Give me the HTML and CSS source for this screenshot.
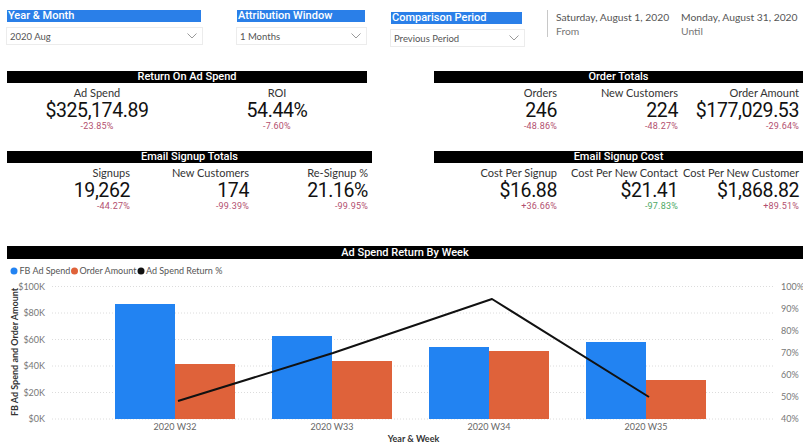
FILE: index.html
```html
<!DOCTYPE html>
<html lang="en">
<head>
    <meta charset="UTF-8">
    <title>Ad Spend Report</title>
    <link rel="stylesheet" href="styles.css">
</head>
<body>
    <div class="report">
        <!-- Filters -->
        <div class="filters">
            <div class="slicer slicer-month">
                <div class="slicer-head">Year &amp; Month</div>
                <div class="slicer-box">
                    <span>2020 Aug</span>
                    <svg class="chev" width="10" height="6" viewBox="0 0 10 6"><polyline points="0.5,0.5 5,5 9.5,0.5"/></svg>
                </div>
            </div>
            <div class="slicer slicer-window">
                <div class="slicer-head">Attribution Window</div>
                <div class="slicer-box">
                    <span>1 Months</span>
                    <svg class="chev" width="10" height="6" viewBox="0 0 10 6"><polyline points="0.5,0.5 5,5 9.5,0.5"/></svg>
                </div>
            </div>
            <div class="slicer slicer-compare">
                <div class="slicer-head">Comparison Period</div>
                <div class="slicer-box">
                    <span>Previous Period</span>
                    <svg class="chev" width="10" height="6" viewBox="0 0 10 6"><polyline points="0.5,0.5 5,5 9.5,0.5"/></svg>
                </div>
            </div>
            <div class="dates">
                <div class="date-col date-from">
                    <div class="date">Saturday, August 1, 2020</div>
                    <div class="date-label">From</div>
                </div>
                <div class="date-col">
                    <div class="date">Monday, August 31, 2020</div>
                    <div class="date-label">Until</div>
                </div>
            </div>
        </div>

        <!-- KPI cards -->
        <div class="card-row row-top">
            <section class="card card-roas">
                <h2 class="card-title">Return On Ad Spend</h2>
                <div class="metrics centered">
                    <div class="metric">
                        <div class="label">Ad Spend</div>
                        <div class="value">$325,174.89</div>
                        <div class="delta down">-23.85%</div>
                    </div>
                    <div class="metric">
                        <div class="label">ROI</div>
                        <div class="value">54.44%</div>
                        <div class="delta down">-7.60%</div>
                    </div>
                </div>
            </section>
            <section class="card card-orders">
                <h2 class="card-title">Order Totals</h2>
                <div class="metrics">
                    <div class="metric">
                        <div class="label">Orders</div>
                        <div class="value">246</div>
                        <div class="delta down">-48.86%</div>
                    </div>
                    <div class="metric">
                        <div class="label">New Customers</div>
                        <div class="value">224</div>
                        <div class="delta down">-48.27%</div>
                    </div>
                    <div class="metric">
                        <div class="label">Order Amount</div>
                        <div class="value">$177,029.53</div>
                        <div class="delta down">-29.64%</div>
                    </div>
                </div>
            </section>
        </div>

        <div class="card-row row-bottom">
            <section class="card card-signups">
                <h2 class="card-title">Email Signup Totals</h2>
                <div class="metrics">
                    <div class="metric">
                        <div class="label">Signups</div>
                        <div class="value">19,262</div>
                        <div class="delta down">-44.27%</div>
                    </div>
                    <div class="metric">
                        <div class="label">New Customers</div>
                        <div class="value">174</div>
                        <div class="delta down">-99.39%</div>
                    </div>
                    <div class="metric">
                        <div class="label">Re-Signup %</div>
                        <div class="value">21.16%</div>
                        <div class="delta down">-99.95%</div>
                    </div>
                </div>
            </section>
            <section class="card card-cost">
                <h2 class="card-title">Email Signup Cost</h2>
                <div class="metrics">
                    <div class="metric">
                        <div class="label">Cost Per Signup</div>
                        <div class="value">$16.88</div>
                        <div class="delta down">+36.66%</div>
                    </div>
                    <div class="metric">
                        <div class="label">Cost Per New Contact</div>
                        <div class="value">$21.41</div>
                        <div class="delta up">-97.83%</div>
                    </div>
                    <div class="metric">
                        <div class="label">Cost Per New Customer</div>
                        <div class="value">$1,868.82</div>
                        <div class="delta down">+89.51%</div>
                    </div>
                </div>
            </section>
        </div>

        <!-- Weekly chart -->
        <section class="chart">
            <h2 class="card-title">Ad Spend Return By Week</h2>
            <svg class="plot" width="796" height="186" viewBox="7 258 796 186">
                <!-- legend -->
                <g class="legend">
                    <circle cx="14" cy="270" r="3.5" fill="#2283f2"/>
                    <text x="19.5" y="273">FB Ad Spend</text>
                    <circle cx="74.5" cy="270" r="3.5" fill="#df623a"/>
                    <text x="79.5" y="273">Order Amount</text>
                    <circle cx="141" cy="270" r="3.5" fill="#111"/>
                    <text x="146" y="273">Ad Spend Return %</text>
                </g>

                <!-- grid -->
                <g class="grid">
                    <line x1="52" x2="775" y1="285.5" y2="285.5"/>
                    <line x1="52" x2="775" y1="312" y2="312"/>
                    <line x1="52" x2="775" y1="338.5" y2="338.5"/>
                    <line x1="52" x2="775" y1="365" y2="365"/>
                    <line x1="52" x2="775" y1="391.5" y2="391.5"/>
                    <line x1="52" x2="775" y1="418" y2="418"/>
                </g>

                <!-- left axis -->
                <g class="axis axis-left">
                    <text x="45" y="288.5">$100K</text>
                    <text x="45" y="315">$80K</text>
                    <text x="45" y="341.5">$60K</text>
                    <text x="45" y="368">$40K</text>
                    <text x="45" y="394.5">$20K</text>
                    <text x="45" y="421">$0K</text>
                </g>

                <!-- right axis -->
                <g class="axis axis-right">
                    <text x="781" y="288.5">100%</text>
                    <text x="781" y="310.5">90%</text>
                    <text x="781" y="332.5">80%</text>
                    <text x="781" y="354.5">70%</text>
                    <text x="781" y="376.5">60%</text>
                    <text x="781" y="398.5">50%</text>
                    <text x="781" y="420.5">40%</text>
                </g>

                <!-- bars -->
                <g class="bars-spend">
                    <rect x="115" y="303" width="60" height="115"/>
                    <rect x="272" y="335" width="60" height="83"/>
                    <rect x="429" y="346" width="60" height="72"/>
                    <rect x="586" y="341" width="60" height="77"/>
                </g>
                <g class="bars-orders">
                    <rect x="175" y="363" width="60" height="55"/>
                    <rect x="332" y="360" width="60" height="58"/>
                    <rect x="489" y="350" width="60" height="68"/>
                    <rect x="646" y="379" width="60" height="39"/>
                </g>

                <!-- return line -->
                <polyline class="return-line" points="178,400 333,352 492,298 649,396"/>

                <!-- category axis -->
                <g class="axis axis-bottom">
                    <text x="175" y="428.5">2020 W32</text>
                    <text x="332" y="428.5">2020 W33</text>
                    <text x="489" y="428.5">2020 W34</text>
                    <text x="646" y="428.5">2020 W35</text>
                </g>
                <text class="axis-title" x="413.5" y="441">Year &amp; Week</text>
                <text class="axis-title" transform="translate(18 351) rotate(-90)">FB Ad Spend and Order Amount</text>
            </svg>
        </section>
    </div>
</body>
</html>
```

FILE: styles.css
```css
/* General */
body {
    margin: 0;
    background: #fff;
    font-family: 'Lato', sans-serif;
    color: #333;
}

.report {
    width: 810px;
    height: 444px;
    padding: 10px 7px 0;
    box-sizing: border-box;
    overflow: hidden;
}

/* Filters */
.filters {
    display: flex;
    align-items: flex-start;
    height: 61px;
}

.slicer-head {
    background-color: #2a7fe8;
    color: #fff;
    font-family: 'Roboto', sans-serif;
    font-weight: 500;
    font-size: 11px;
    line-height: 12px;
    height: 12px;
    padding-left: 1px;
    margin-left: 1px;
    margin-right: 2px;
}

.slicer-box {
    display: flex;
    align-items: center;
    justify-content: space-between;
    height: 18px;
    margin-top: 5px;
    padding: 0 5px 0 3px;
    border: 1px solid #ececec;
    box-sizing: border-box;
    font-size: 9.5px;
    color: #555;
}

.chev {
    fill: none;
    stroke: #9a9a9a;
    stroke-width: 1;
}

.slicer-month {
    width: 197px;
    margin-left: -1px;
}

.slicer-window {
    width: 131px;
    margin-left: 33px;
}

.slicer-compare {
    width: 135px;
    margin-left: 23px;
    margin-top: 2px;
}

.slicer-compare .slicer-head {
    margin-right: 3px;
}

.dates {
    display: flex;
    margin-left: 22px;
    height: 27px;
    padding-left: 8px;
    border-left: 1px solid #c8c8c8;
    font-size: 10.3px;
    line-height: 14px;
    color: #555;
    white-space: nowrap;
}

.date-from {
    width: 125px;
}

.date-label {
    color: #777;
}

/* Cards */
.card-row {
    display: flex;
    justify-content: space-between;
}

.row-bottom {
    margin-top: 20px;
}

.card-roas { width: 360px; }
.card-orders { width: 369px; --col: 121px; }
.card-signups { width: 365px; --col: 119px; }
.card-cost { width: 369px; --col: 121px; }

.card-title {
    margin: 0;
    height: 12px;
    background: #000;
    color: #fff;
    text-align: center;
    font-family: 'Roboto', sans-serif;
    font-weight: 500;
    font-size: 11px;
    line-height: 12px;
}

.metrics {
    display: grid;
    grid-template-columns: repeat(3, var(--col));
    justify-content: end;
    padding-right: 4px;
    margin-top: 3px;
    text-align: right;
}

.metrics.centered {
    grid-template-columns: 1fr 1fr;
    padding-right: 0;
    text-align: center;
}

.label {
    font-size: 11px;
    line-height: 14px;
    color: #333;
}

.value {
    font-family: 'Roboto', sans-serif;
    font-size: 19.5px;
    line-height: 22px;
    color: #111;
    letter-spacing: -0.4px;
}

.delta {
    font-family: 'Roboto', sans-serif;
    font-size: 9px;
    line-height: 10px;
    letter-spacing: 0.2px;
    margin-top: -1px;
}

.delta.down { color: #b3506f; }
.delta.up { color: #4ea865; }

/* Chart */
.chart {
    margin-top: 35px;
}

.chart .card-title {
    height: 13px;
    line-height: 13px;
}

.plot {
    display: block;
    font-family: 'Lato', sans-serif;
}

.legend text {
    font-size: 9px;
    fill: #555;
}

.grid line {
    stroke: #dcdcdc;
    stroke-width: 1;
    stroke-dasharray: 1 2;
}

.axis text {
    font-size: 9px;
    fill: #777;
}

.axis-left text { text-anchor: end; }
.axis-bottom text { text-anchor: middle; fill: #666; }

.bars-spend rect { fill: #2283f2; }
.bars-orders rect { fill: #df623a; }

.return-line {
    fill: none;
    stroke: #111;
    stroke-width: 2;
    stroke-linejoin: round;
}

.axis-title {
    font-size: 9px;
    font-weight: 700;
    fill: #333;
    text-anchor: middle;
}
```
